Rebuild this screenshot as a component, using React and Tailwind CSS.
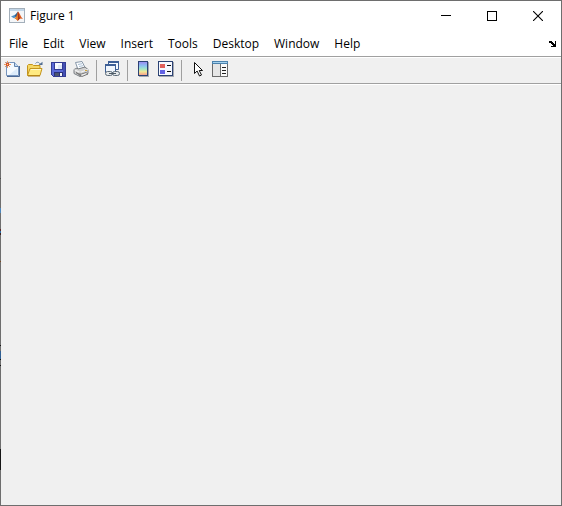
import React from "react";

const MENUS = [
  "File",
  "Edit",
  "View",
  "Insert",
  "Tools",
  "Desktop",
  "Window",
  "Help",
];

// slivers of the window behind, visible through the left frame
const EDGES = [
  { top: 178, height: 1, color: "#4a4a4a" },
  { top: 208, height: 5, color: "#4b86bd" },
  { top: 229, height: 2, color: "#5b2a2a" },
  { top: 231, height: 2, color: "#2a6ea5" },
  { top: 233, height: 2, color: "#3a2020" },
  { top: 261, height: 1, color: "#7a4a22" },
  { top: 345, height: 1, color: "#151515" },
  { top: 351, height: 8, color: "#2f5f93" },
  { top: 359, height: 1, color: "#151515" },
  { top: 365, height: 1, color: "#151515" },
  { top: 449, height: 21, color: "#151515" },
];

function MatlabLogo() {
  return (
    <svg viewBox="0 0 16 16" className="h-4 w-4">
      <rect x="0.5" y="0.5" width="15" height="14" fill="#f4f6f8" stroke="#a3afba" />
      <rect x="1" y="1" width="14" height="2" fill="#c2d6e8" />
      <path d="M2 8.600 5.500 7 7.500 8.600 5 10.200z" fill="#4b8fc4" />
      <path d="M5.500 7C7 6.500 7.600 4.500 9 3.500L8.500 8 7 9.500z" fill="#2b5f8f" />
      <path d="M9 3.500c1.400.8 2.400 5 5 7.600-1.600-.9-2.600-1-3.500 0-.8.900-1.200 1.600-2 1.600-.7-1.400-1.500-2-3-2.300C7.500 9.700 8 6 9 3.500z" fill="#dd5a1e" />
      <path d="M9 3.500c.9 2 .9 5 2 7-.9.600-1.500 2-2.500 2.200C8.800 10 8.400 6.500 9 3.500z" fill="#a3341a" />
      <path d="M5.500 10.400C7.300 9.800 8 8 8.700 6c.3 2.500.3 4.500-.2 6.700-.7-1.400-1.500-2-3-2.300z" fill="#e8862c" />
    </svg>
  );
}

function NewIcon() {
  return (
    <svg viewBox="0 0 16 16" className="h-4 w-4">
      <path d="M2.500 1.500h8l4 4v9h-12z" fill="#f5faff" stroke="#7694bd" />
      <path d="M13.500 7v7H5z" fill="#dcebfa" />
      <path d="M10.500 1.500v4h4" fill="#c4daf3" stroke="#6384ad" />
      <path d="M15.500 5v10.500H3" fill="none" stroke="#4a6895" />
      <path d="M3.500 0v7M0 3.500h7M1 1l5 5M6 1 1 6" stroke="#ea9a62" />
      <rect x="2" y="2" width="3" height="3" fill="#d9532c" />
      <rect x="3" y="3" width="1" height="1" fill="#ffe27a" />
    </svg>
  );
}

function OpenIcon() {
  return (
    <svg viewBox="0 0 16 16" className="h-4 w-4">
      <path d="M8.500 2.500C10 .5 12 1 13.500 3.500" fill="none" stroke="#6c87a8" />
      <path d="M11.500 4h4V.8z" fill="#526e93" />
      <path d="M.5 14.500v-10l1-1h4l1 1h6.500v3.500" fill="#f5d765" stroke="#c4941c" />
      <path d="M.5 14.500l2.500-7h12l-2 7z" fill="#ffea80" stroke="#c4941c" />
      <path d="M4 8.500h10" stroke="#fff9cc" />
      <path d="M1 15h12" stroke="#a9780f" />
    </svg>
  );
}

function SaveIcon() {
  return (
    <svg viewBox="0 0 16 16" className="h-4 w-4" shapeRendering="crispEdges">
      <path d="M1 1h15v15H3l-2-2z" fill="#343c94" />
      <path d="M2 2h13v13H3l-1-1z" fill="#5b6ad8" />
      <path d="M13 2h2v13h-2z" fill="#4450b4" />
      <path d="M4 1h9v8H4z" fill="#343c94" />
      <path d="M5 2h7v6H5z" fill="#f8faff" />
      <path d="M8 4h4v4H8z" fill="#dfe8f8" />
      <path d="M4 11h9v4H4z" fill="#2a3178" />
      <path d="M10 12h2v3h-2z" fill="#f2f4fa" />
      <path d="M5 12h4v3H5z" fill="#4d556f" />
    </svg>
  );
}

function PrintIcon() {
  return (
    <svg viewBox="0 0 16 16" className="h-4 w-4">
      <path d="M2.500 1.500 9 .5l3 6-7 2z" fill="#fbfdff" stroke="#8797a8" />
      <path d="M5 3.500l4-.8M6 5.500l4-.8" stroke="#a9bed4" />
      <path d="M1 8.500 4 7l1 1 7-2 3 2.500v4L7 15.500l-6-3z" fill="#d1d1d1" stroke="#7a7f84" />
      <path d="M1.500 8.800 7 11.500l8-3" fill="none" stroke="#f7f7f7" />
      <path d="M7 11.500v4" stroke="#888" />
      <path d="M3 11.500l4 2 6-2 2 1.500-6 2.500z" fill="#eee" stroke="#777" />
      <rect x="12" y="9" width="2" height="1" fill="#d3a536" />
    </svg>
  );
}

function LinkIcon() {
  return (
    <svg viewBox="0 0 16 16" className="h-4 w-4">
      <path d="M4.500.5h10v8h-10z" fill="#f5faff" stroke="#3d5f96" />
      <path d="M4 0h11v2H4z" fill="#3d5f96" />
      <path d="M1.500 3.500h10v8h-10z" fill="#f0f6fd" stroke="#3d5f96" />
      <path d="M1 3h11v2H1z" fill="#3d5f96" />
      <rect x="1.500" y="10.500" width="7" height="4" rx="2" fill="#e4e8ea" stroke="#5c6b78" />
      <rect x="8.500" y="10.500" width="7" height="4" rx="2" fill="#e4e8ea" stroke="#5c6b78" />
      <path d="M5 12.500h7" stroke="#4d5a65" />
    </svg>
  );
}

function ColorbarIcon() {
  return (
    <svg viewBox="0 0 16 16" className="h-4 w-4" shapeRendering="crispEdges">
      <defs>
        <linearGradient id="bar" x1="0" y1="0" x2="0" y2="1">
          <stop offset="0" stopColor="#9a8cf0" />
          <stop offset="0.300" stopColor="#8cc4f0" />
          <stop offset="0.550" stopColor="#a5e8c4" />
          <stop offset="0.750" stopColor="#f2e795" />
          <stop offset="1" stopColor="#f4a08c" />
        </linearGradient>
      </defs>
      <rect x="4" y="1" width="10" height="15" fill="#a4a8b0" />
      <rect x="3" y="0" width="10" height="15" fill="#2c4374" />
      <rect x="4" y="1" width="8" height="13" fill="url(#bar)" />
    </svg>
  );
}

function LegendIcon() {
  return (
    <svg viewBox="0 0 16 16" className="h-4 w-4" shapeRendering="crispEdges">
      <rect x="1" y="1" width="15" height="15" fill="#a4a8b0" />
      <rect x="0" y="0" width="15" height="15" fill="#2c4374" />
      <rect x="1" y="1" width="13" height="13" fill="#f5f8ff" />
      <rect x="2" y="3" width="5" height="4" fill="#e0605c" />
      <rect x="2" y="9" width="5" height="4" fill="#6262e4" />
      <rect x="9" y="4" width="4" height="1" fill="#111" />
      <rect x="9" y="10" width="4" height="1" fill="#111" />
    </svg>
  );
}

function PointerIcon() {
  return (
    <svg viewBox="0 0 16 16" className="h-4 w-4">
      <path
        d="M5.500 1.500v11l2.600-2.500 2.400 5 2-1-2.300-4.500h3.300z"
        fill="#fff"
        stroke="#111"
      />
    </svg>
  );
}

function PlotToolsIcon() {
  return (
    <svg viewBox="0 0 16 16" className="h-4 w-4" shapeRendering="crispEdges">
      <rect x="0" y="0" width="16" height="16" fill="#6a6a6a" />
      <rect x="0" y="0" width="16" height="3" fill="#4c82ad" />
      <rect x="1" y="1" width="14" height="1" fill="#a5d2ee" />
      <rect x="1" y="3" width="7" height="12" fill="#e6e6e6" />
      <rect x="9" y="3" width="6" height="12" fill="#fafafa" />
      <path d="M10 6.500h4M10 9.500h4M10 12.500h4" stroke="#222" />
    </svg>
  );
}

const TOOLS = [
  [
    { name: "New Figure", Icon: NewIcon },
    { name: "Open File", Icon: OpenIcon },
    { name: "Save Figure", Icon: SaveIcon },
    { name: "Print Figure", Icon: PrintIcon },
  ],
  [{ name: "Link Plot", Icon: LinkIcon }],
  [
    { name: "Insert Colorbar", Icon: ColorbarIcon },
    { name: "Insert Legend", Icon: LegendIcon },
  ],
  [
    { name: "Edit Plot", Icon: PointerIcon },
    { name: "Open Property Inspector", Icon: PlotToolsIcon },
  ],
];

function TitleBar() {
  return (
    <header className="flex h-[30px] items-center bg-white pl-2">
      <MatlabLogo />
      <h1 className="flex-1 pl-[5px] text-xs">Figure 1</h1>
      <button aria-label="Minimize" className="grid h-full w-[46px] place-items-center">
        <svg viewBox="0 0 10 10" className="h-[10px] w-[10px]">
          <path d="M0 4.500h10" stroke="#000" />
        </svg>
      </button>
      <button aria-label="Maximize" className="grid h-full w-[46px] place-items-center">
        <svg viewBox="0 0 10 10" className="h-[10px] w-[10px]">
          <rect x="0.500" y="0.500" width="9" height="9" fill="none" stroke="#000" />
        </svg>
      </button>
      <button aria-label="Close" className="grid h-full w-[46px] place-items-center">
        <svg viewBox="0 0 10 10" className="h-[10px] w-[10px]">
          <path d="M0 0l10 10M10 0 0 10" stroke="#000" strokeWidth="1.100" />
        </svg>
      </button>
    </header>
  );
}

function MenuBar() {
  return (
    <nav className="flex h-[26px] items-center border-b border-[#a0a0a0] bg-white pr-[5px]">
      {MENUS.map((menu) => (
        <button key={menu} className="pr-[7px] pl-2 text-xs">
          {menu}
        </button>
      ))}
      <button aria-label="Dock Figure" className="ml-auto">
        <svg viewBox="0 0 7 6" className="h-[6px] w-[7px]" shapeRendering="crispEdges">
          <path d="M0 0h3v1h1v1h1v1h1V0h1v6H2V5h2V4H3V3H2V2H0z" fill="#000" />
        </svg>
      </button>
    </nav>
  );
}

function ToolBar() {
  return (
    <div
      role="toolbar"
      className="flex h-[27px] items-start border-t border-b border-t-white border-b-[#a0a0a0]"
    >
      {TOOLS.map((group, index) => (
        <React.Fragment key={index}>
          {index > 0 && (
            <span className="mt-0.5 mr-1 ml-[3px] h-[21px] w-px bg-[#a0a0a0]" />
          )}
          {group.map(({ name, Icon }) => (
            <button
              key={name}
              aria-label={name}
              className="flex h-[22px] w-[23px] items-center pl-[3px]"
            >
              <Icon />
            </button>
          ))}
        </React.Fragment>
      ))}
    </div>
  );
}

export default function App() {
  return (
    <div className="relative flex min-h-screen flex-col border border-[#6e6e6e] bg-[#f0f0f0] font-['Open_Sans','Noto_Sans',sans-serif] text-black">
      <TitleBar />
      <MenuBar />
      <ToolBar />
      <main className="flex-1 border-t border-white" />
      {EDGES.map((edge) => (
        <span
          key={edge.top}
          className="absolute -left-px w-px"
          style={{
            top: edge.top - 1,
            height: edge.height,
            backgroundColor: edge.color,
          }}
        />
      ))}
    </div>
  );
}
